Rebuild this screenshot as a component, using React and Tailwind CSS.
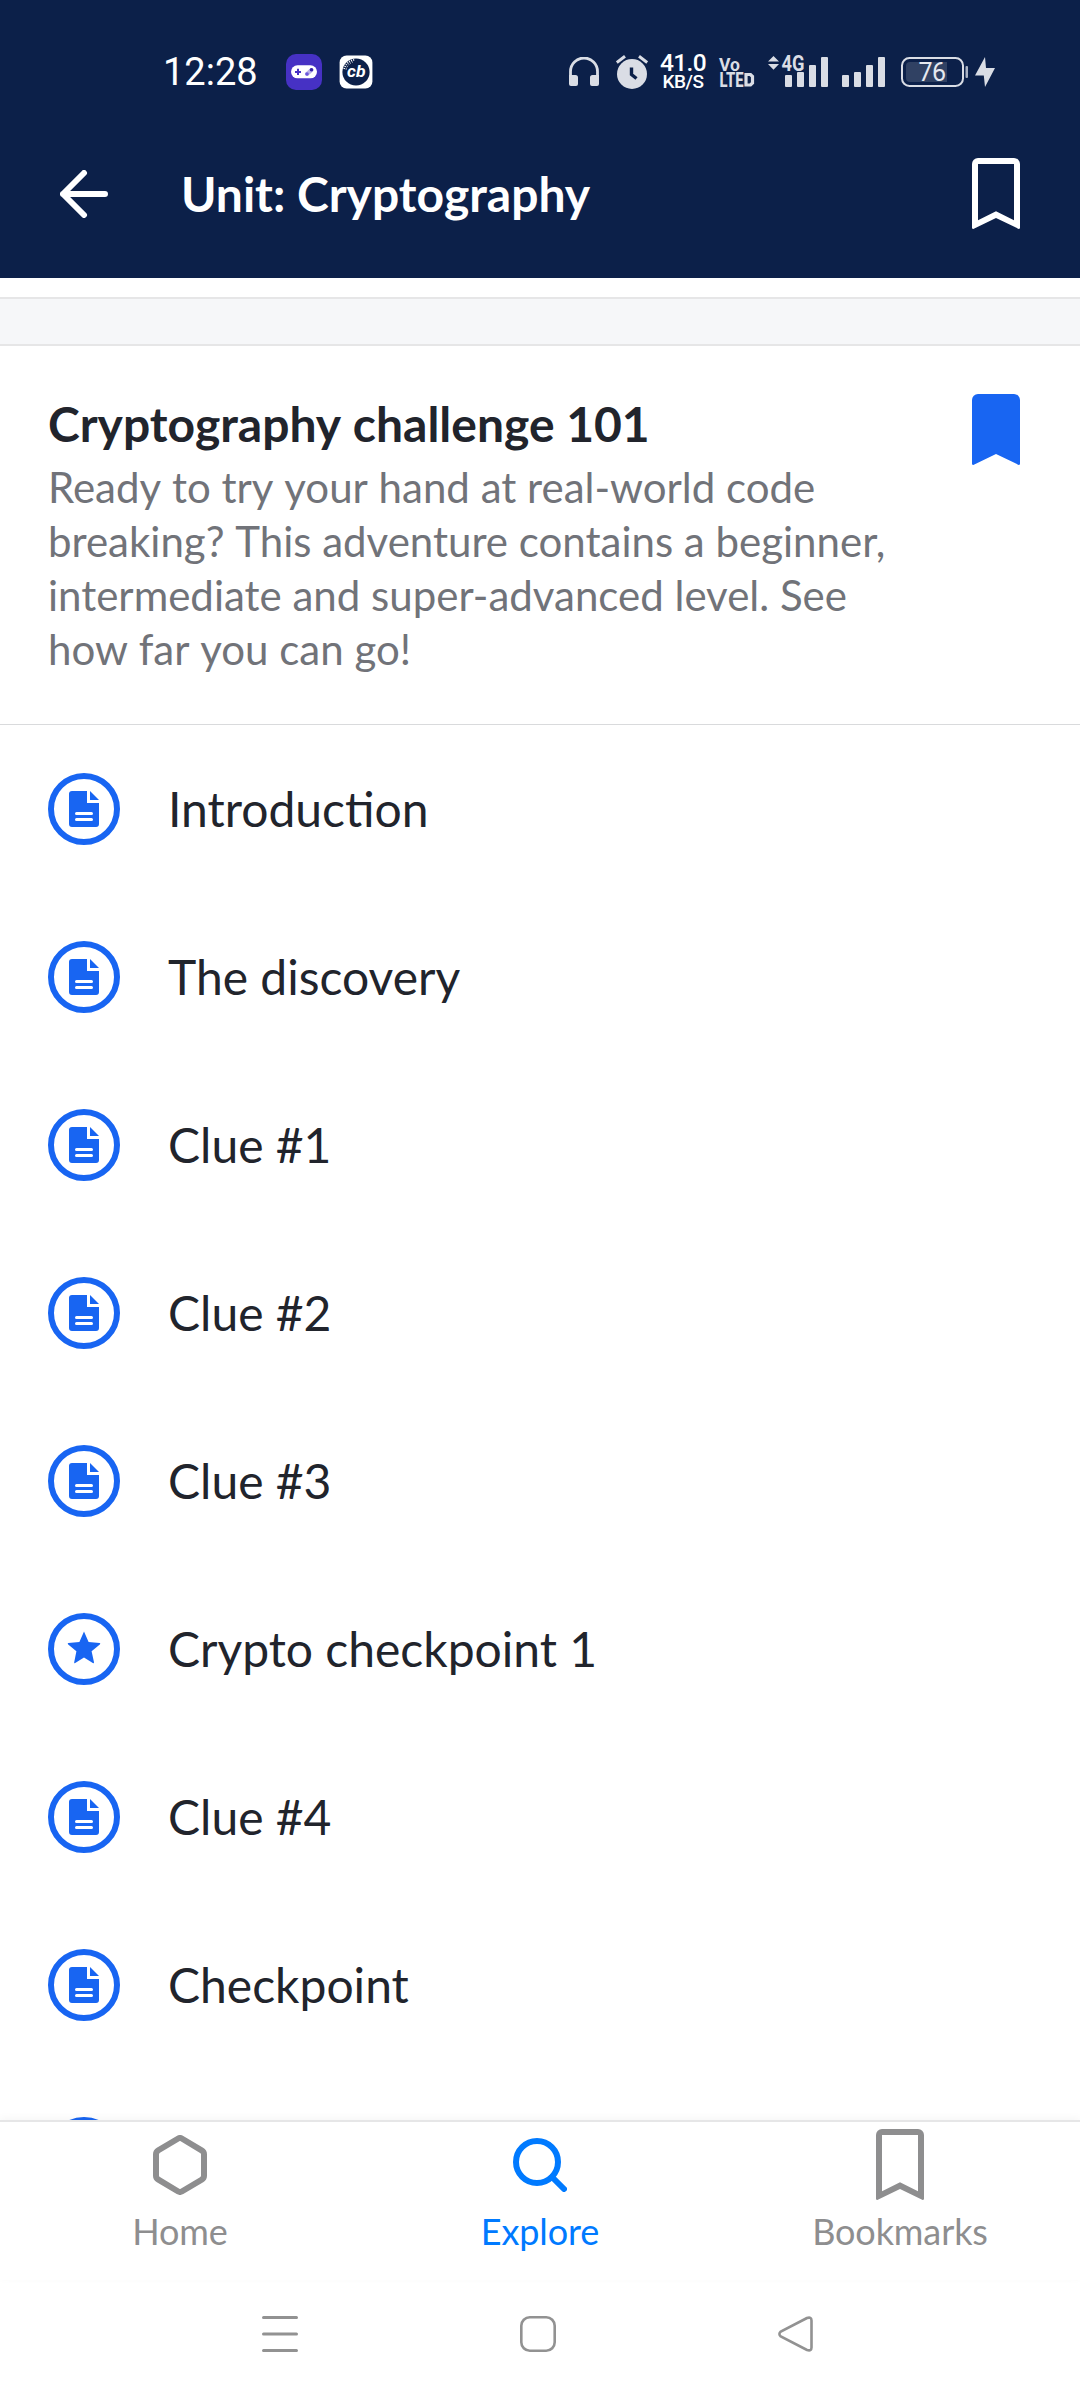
import { Fragment } from "react";

const lessons = [
  { title: "Introduction", kind: "article" },
  { title: "The discovery", kind: "article" },
  { title: "Clue #1", kind: "article" },
  { title: "Clue #2", kind: "article" },
  { title: "Clue #3", kind: "article" },
  { title: "Crypto checkpoint 1", kind: "exercise" },
  { title: "Clue #4", kind: "article" },
  { title: "Checkpoint", kind: "article" },
  { title: "Clue #5", kind: "article" },
];

// Each word is shaped on its own, so spaces keep their full width.
function Words({ children }) {
  return children.split(" ").map((word, i) => (
    <Fragment key={i}>
      {i > 0 && " "}
      <span className="inline-block">{word}</span>
    </Fragment>
  ));
}

function LessonIcon({ kind }) {
  return (
    <svg className="size-[72px] shrink-0" viewBox="0 0 72 72" fill="#1865f2">
      <circle cx="36" cy="36" r="33" fill="none" stroke="#1865f2" strokeWidth="6" />
      {kind === "exercise" ? (
        <path d="M36 18.6 40.6 29 51.6 30Q53 30.2 51.8 31.4L43.6 38.3 46 49.2Q46 50.6 44.8 50L36 44.6 27.2 50Q26 50.6 26.2 49.2L28.4 38.3 20.2 31.4Q19 30.2 20.4 30L31.4 29Z" />
      ) : (
        <>
          <path d="M24 18H39V30H51V51A3 3 0 0 1 48 54H24A3 3 0 0 1 21 51V21A3 3 0 0 1 24 18Z" />
          <path d="M42 18 51 27H42Z" />
          <path d="M28.5 40.5H43.5M28.5 46.5H43.5" stroke="#fff" strokeWidth="3" strokeLinecap="round" />
        </>
      )}
    </svg>
  );
}

function Bookmark({ filled }) {
  return (
    <svg className="h-[72px] w-[48px]" viewBox="0 0 48 72" fill="currentColor" fillRule="evenodd">
      {filled ? (
        <path d="M6 0H42A6 6 0 0 1 48 6V69.6Q48 71.4 46.2 70.7L24 60 1.8 70.7Q0 71.4 0 69.6V6A6 6 0 0 1 6 0Z" />
      ) : (
        <path d="M6 0H42A6 6 0 0 1 48 6V69.6Q48 71.4 46.2 70.7L24 60 1.8 70.7Q0 71.4 0 69.6V6A6 6 0 0 1 6 0ZM6 6V62.3L24 53.2 42 62.3V6Z" />
      )}
    </svg>
  );
}

function Signal() {
  return (
    <svg className="h-[30px] w-[43px]" viewBox="0 0 43 30" fill="#dadde5">
      <rect y="18" width="7" height="12" rx="1" />
      <rect x="12" y="15" width="7" height="15" rx="1" />
      <rect x="24" y="8" width="7" height="22" rx="1" />
      <rect x="36" width="7" height="30" rx="1" />
    </svg>
  );
}

function StatusBar() {
  return (
    <div className="flex h-[144px] items-center pl-[163px] font-['Roboto',sans-serif] text-white">
      <span className="w-[123px] text-[38px] leading-[38px]">12:28</span>
      <svg className="size-[36px]" viewBox="0 0 36 36">
        <rect width="36" height="36" rx="10" fill="#4631c4" />
        <rect x="5" y="11.3" width="26" height="13" rx="6.5" fill="#fff" />
        <path d="M12 14.8V21M9 17.9H15" stroke="#4631c4" strokeWidth="2" />
        <path d="M21 20 25.5 16" stroke="#b9b0ea" strokeWidth="4" strokeLinecap="round" />
        <circle cx="25.5" cy="15.8" r="1.8" fill="#3520a8" />
        <circle cx="21" cy="20" r="1.8" fill="#6a56dc" />
      </svg>
      <svg className="ml-[17px] h-[34px] w-[34px]" viewBox="0 0 34 34">
        <rect x="0.6" y="0.4" width="32.8" height="33.2" rx="7" fill="#fff" />
        <circle cx="17" cy="17" r="13.6" fill="#0c2049" />
        <path d="M5.2 14A12.4 12.4 0 0 1 16 4.8" fill="none" stroke="#fff" strokeWidth="1.8" strokeDasharray="1 1.2" />
        <path d="M7.2 14.5A10.5 10.5 0 0 1 14 7" fill="none" stroke="#fff" strokeWidth="1" strokeDasharray="1 1.4" />
        <text x="8" y="22" fill="#fff" fontSize="16" fontWeight="700" fontStyle="italic" textLength="18.5" lengthAdjust="spacingAndGlyphs">cb</text>
      </svg>
      <svg className="ml-[196px] h-[30px] w-[30px]" viewBox="0 0 30 30">
        <path d="M1.5 21V14.5a13.5 13.5 0 0 1 27 0V21" fill="none" stroke="#dadde5" strokeWidth="2.8" />
        <path d="M0 18H6.500a2.500 2.500 0 0 1 2.500 2.500V27a2 2 0 0 1-2 2H2a2 2 0 0 1-2-2ZM30 18H23.500a2.500 2.500 0 0 0-2.500 2.500V27a2 2 0 0 0 2 2H28a2 2 0 0 0 2-2Z" fill="#dadde5" />
      </svg>
      <svg className="ml-[17px] h-[34px] w-[32px]" viewBox="0 0 32 34">
        <circle cx="16" cy="19" r="15" fill="#dadde5" />
        <path d="M0.800 7.500 9 1.200M31.200 7.500 23 1.200" stroke="#dadde5" strokeWidth="3" />
        <path d="M15.500 12.500V19.500L20.500 23.500" fill="none" stroke="#0c2049" strokeWidth="3.400" />
      </svg>
      <div className="ml-[9px] flex w-[52px] flex-col items-center font-medium">
        <span className="h-[18px] text-[24.5px] leading-[18px] tracking-[-0.6px]">41.0</span>
        <span className="mt-[2px] h-[16px] text-[19px] leading-[16px] tracking-[-0.5px]">KB/S</span>
      </div>
      <svg className="ml-[9px] h-[44px] w-[38px] font-['Roboto',sans-serif]" viewBox="-1 -6 38 44" fill="#dadde5">
        <text x="0" y="14.500" fontSize="18.500" fontWeight="700" textLength="21" lengthAdjust="spacingAndGlyphs">Vo</text>
        <text x="0.500" y="30.500" fontSize="19.500" fontWeight="800" textLength="24" lengthAdjust="spacingAndGlyphs">LTE</text>
        <path d="M27 18.500H31.500L33.500 20.500V27L31.500 29H27Z" fill="none" stroke="#dadde5" strokeWidth="3.200" />
      </svg>
      <div className="relative ml-[29px]">
        <Signal />
        <svg className="absolute top-[-9px] left-[-18px] h-[32px] w-[42px]" viewBox="0 -6 42 32" fill="#dadde5">
          <path d="M1 7.500 6.500 2 12 7.500ZM1 10H12L6.500 15.800Z" />
          <text x="14.500" y="17" fontSize="21.500" fontWeight="700" textLength="23" lengthAdjust="spacingAndGlyphs" stroke="#0c2049" strokeWidth="2" paintOrder="stroke">4G</text>
        </svg>
      </div>
      <div className="ml-[14px]">
        <Signal />
      </div>
      <svg className="ml-[16px] h-[30px] w-[68px]" viewBox="0 0 68 30">
        <rect x="1" y="1" width="61" height="28" rx="7.500" fill="none" stroke="#dadde5" strokeWidth="2" />
        <path d="M9 5H46V25H9A4 4 0 0 1 5 21V9A4 4 0 0 1 9 5Z" fill="#304163" />
        <rect x="64.500" y="9" width="2.500" height="12" rx="1" fill="#aab2c3" />
        <text x="17.500" y="24" fontSize="25" fill="#e6e9ef" textLength="27.500">76</text>
      </svg>
      <svg className="ml-[6px] h-[30px] w-[20px]" viewBox="0 0 20 30" fill="#dadde5">
        <path d="M10 0 0 18.500H8.800L10 30 20 11H11Z" />
      </svg>
    </div>
  );
}

function Tab({ label, color, children }) {
  return (
    <div className={`flex flex-1 flex-col items-center ${color}`}>
      <div className="mt-[7px] flex h-[72px] items-center justify-center">{children}</div>
      <span className="mt-[6px] text-[36px] leading-[48px] tracking-[-0.1px]">{label}</span>
    </div>
  );
}

export default function App() {
  return (
    <div className="flex h-[2400px] w-[1080px] flex-col overflow-hidden bg-white font-['Lato',sans-serif] text-[#21242c]">
      <header className="h-[278px] shrink-0 bg-[#0c2049]">
        <StatusBar />
        <div className="flex h-[100px] items-center pr-[60px] pl-[60px] text-white">
          <svg className="size-[48px]" viewBox="0 0 48 48" fill="none" stroke="currentColor" strokeWidth="6" strokeLinecap="round" strokeLinejoin="round">
            <path d="M24 3 3 24 24 45M3 24H45" />
          </svg>
          <h1 className="ml-[73px] flex-1 text-[48px] leading-[60px] font-bold">
            <Words>Unit: Cryptography</Words>
          </h1>
          <Bookmark />
        </div>
      </header>

      <main className="min-h-0 flex-1 overflow-hidden">
        <div className="mt-[19px] h-[49px] border-y-2 border-[#e6e6e7] bg-[#f6f7f9]" />
        <section className="flex h-[379px] justify-between border-b border-[#d9dadc] pt-[48px] pr-[60px] pl-[48px]">
          <div>
            <h2 className="text-[48px] leading-[60px] font-bold">
              <Words>Cryptography challenge 101</Words>
            </h2>
            <p className="mt-[6px] w-[850px] text-[42px] leading-[54px] text-[#717379]">
              <Words>
                Ready to try your hand at real-world code breaking? This adventure contains a beginner, intermediate and super-advanced level. See how far you can go!
              </Words>
            </p>
          </div>
          <div className="text-[#1865f2]">
            <Bookmark filled />
          </div>
        </section>
        <ul>
          {lessons.map((lesson) => (
            <li key={lesson.title} className="flex h-[168px] items-center pl-[48px]">
              <LessonIcon kind={lesson.kind} />
              <span className="ml-[48px] text-[48px] leading-[60px] tracking-normal">{lesson.title}</span>
            </li>
          ))}
        </ul>
      </main>

      <nav className="relative flex h-[160px] shrink-0 border-t-2 border-[#e6e6e7] bg-white shadow-[0_-2px_8px_rgba(0,0,0,0.04)]">
        <Tab label="Home" color="text-[#8e8e8f]">
          <svg className="h-[60px] w-[54px]" viewBox="0 0 54 60" fill="none" stroke="currentColor" strokeWidth="6">
            <path d="M25.200 3.500Q27 2.500 28.800 3.500L48.600 15.300Q51 16.800 51 19.200V40.800Q51 43.200 48.600 44.700L28.800 56.500Q27 57.500 25.200 56.500L5.400 44.700Q3 43.200 3 40.800V19.200Q3 16.800 5.400 15.300Z" />
          </svg>
        </Tab>
        <Tab label="Explore" color="text-[#007aff]">
          <svg className="h-[54px] w-[54px]" viewBox="0 0 54 54" fill="none" stroke="currentColor" strokeWidth="6" strokeLinecap="round">
            <circle cx="24" cy="24" r="21" />
            <path d="M39 39 51 51" />
          </svg>
        </Tab>
        <Tab label="Bookmarks" color="text-[#8e8e8f]">
          <Bookmark />
        </Tab>
      </nav>

      <footer className="flex h-[120px] shrink-0 items-start pt-[36px] pl-[262px] text-[#929292]">
        <svg className="size-[36px]" viewBox="0 0 36 36" stroke="currentColor" strokeWidth="3" strokeLinecap="round">
          <path d="M1.500 1.500H34.500M1.500 18H34.500M1.500 34.500H34.500" />
        </svg>
        <svg className="ml-[222px] size-[36px]" viewBox="0 0 36 36" fill="none" stroke="currentColor" strokeWidth="2.600">
          <rect x="1.300" y="1.300" width="33.400" height="33.400" rx="8.500" />
        </svg>
        <svg className="ml-[222px] size-[36px]" viewBox="0 0 36 36" fill="none" stroke="currentColor" strokeWidth="2.600">
          <path d="M29 2 2.800 15.500Q0 18 2.800 20.500L29 34Q33.500 35.500 33.500 31.500V4.500Q33.500 0.500 29 2Z" />
        </svg>
      </footer>
    </div>
  );
}
